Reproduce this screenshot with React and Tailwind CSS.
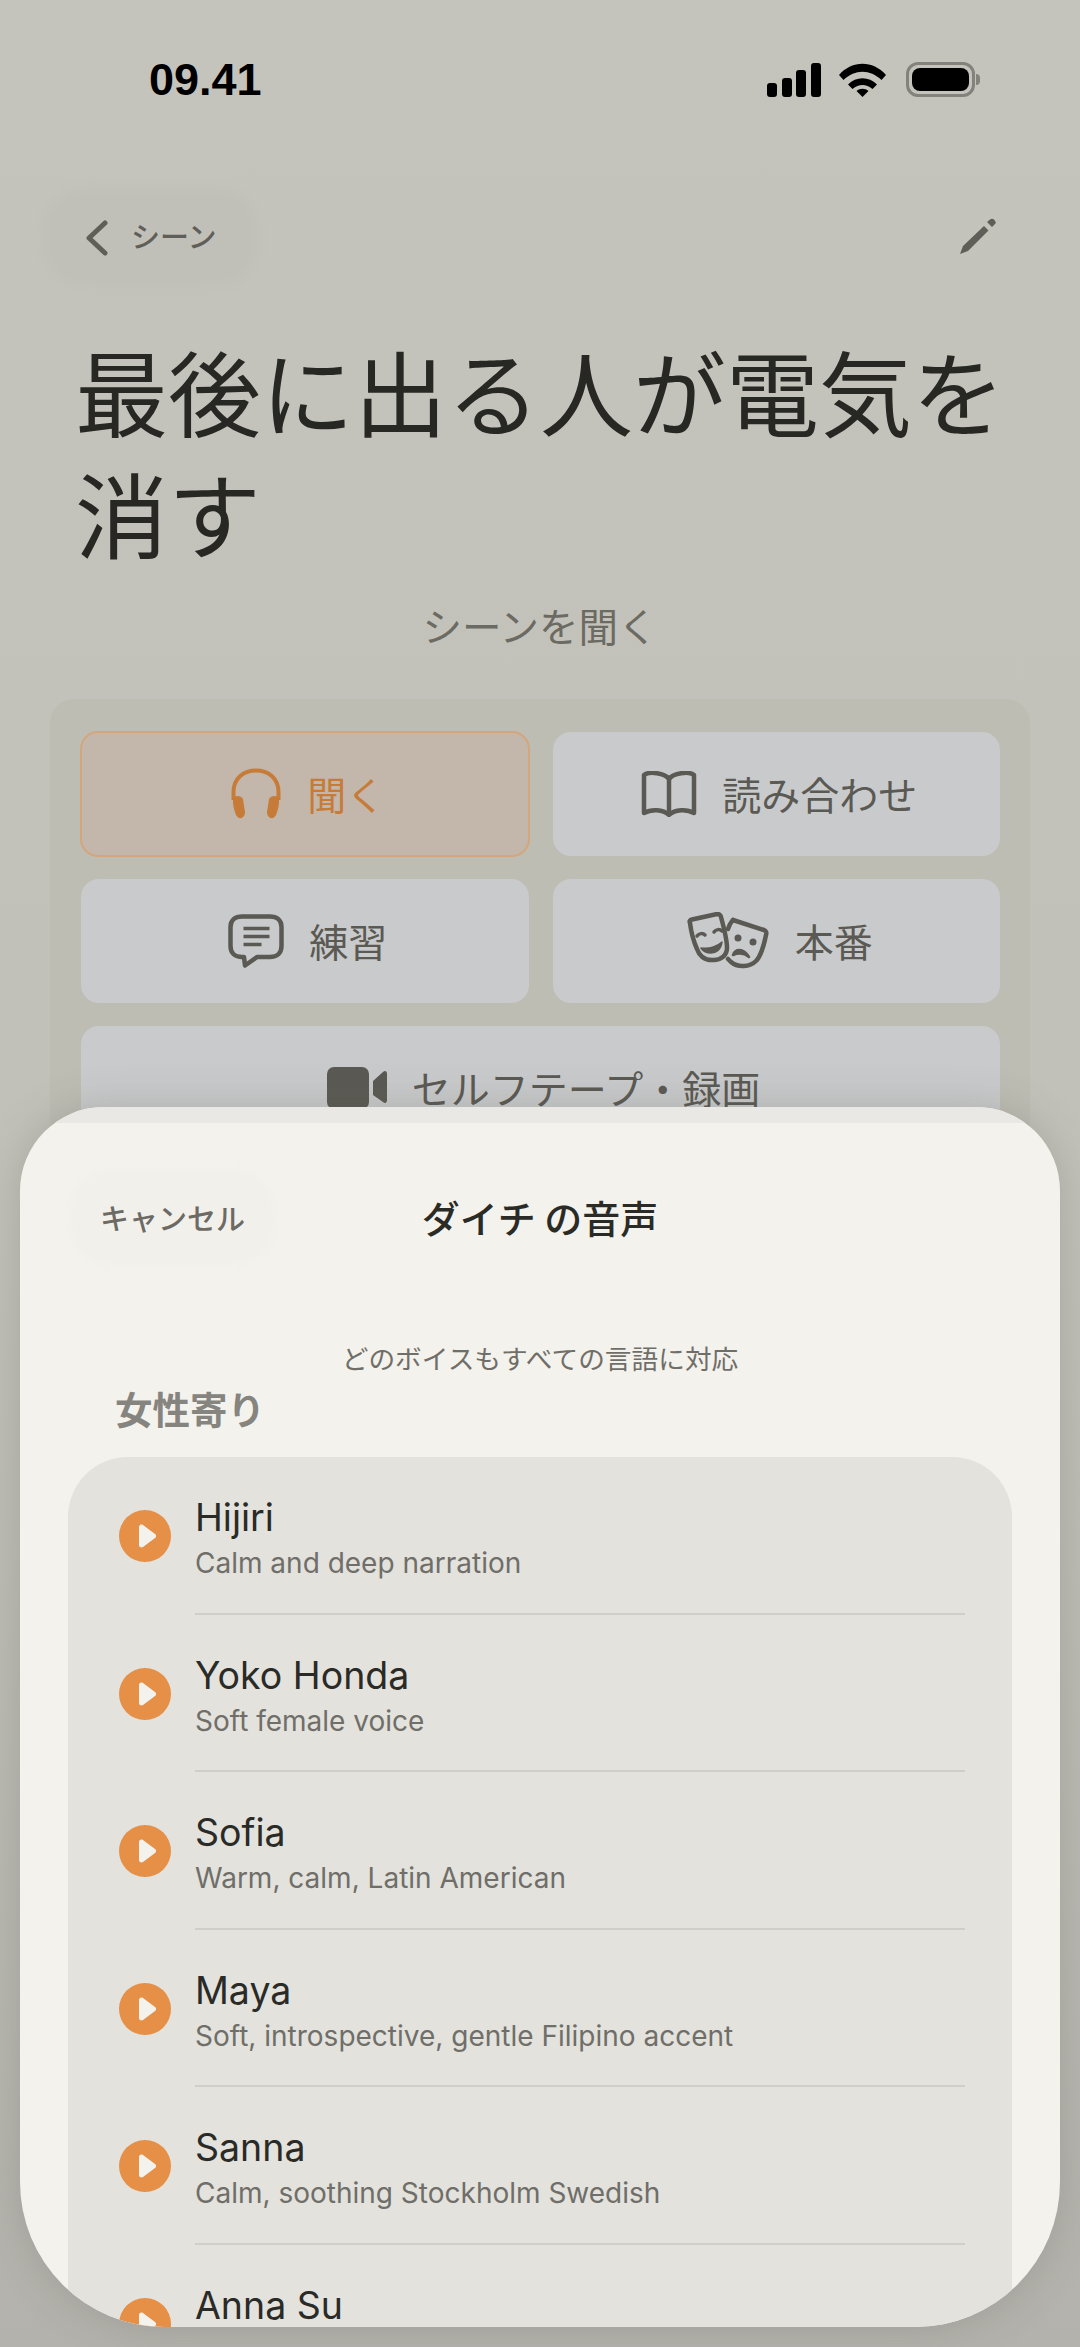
import React from "react";

const cjk = "font-['Noto_Sans_CJK_JP','Noto_Sans',sans-serif]";

const voices = [
  { name: "Hijiri", desc: "Calm and deep narration" },
  { name: "Yoko Honda", desc: "Soft female voice" },
  { name: "Sofia", desc: "Warm, calm, Latin American" },
  { name: "Maya", desc: "Soft, introspective, gentle Filipino accent" },
  { name: "Sanna", desc: "Calm, soothing Stockholm Swedish" },
  { name: "Anna Su", desc: "" },
];

const StatusIcons = () => (
  <div className="flex items-center">
    <svg width="54" height="34" viewBox="0 0 54 34" fill="#000">
      <rect x="0" y="20" width="10" height="14" rx="3" />
      <rect x="15" y="15" width="10" height="19" rx="3" />
      <rect x="29" y="7" width="10" height="27" rx="3" />
      <rect x="44" y="0" width="10" height="34" rx="3" />
    </svg>
    <svg className="ml-[18px]" width="47" height="34" viewBox="0 0 47 34" fill="#000">
      <path d="M0 12 C13 -3 34 -3 47 12 L42.5 17 C31 6 16 6 4.5 17 Z" />
      <path d="M9 21.500 C17 13 30 13 38 21.500 L33.500 26 C27 20.500 20 20.500 13.500 26 Z" />
      <path d="M17.500 28 C21 25 26 25 29.500 28 L23.500 34 Z" />
    </svg>
    <div className="ml-[20px] flex items-center">
      <div className="w-[69px] h-[35px] rounded-[12px] border-[3px] border-[#83827d] p-[3px]">
        <div className="w-full h-full rounded-[8px] bg-black" />
      </div>
      <div className="w-[4px] h-[11px] rounded-r-full bg-[#83827d] ml-[1px]" />
    </div>
  </div>
);

const Headphones = () => (
  <svg width="52" height="52" viewBox="0 0 52 52" fill="none">
    <path d="M3.500 32 V24 C3.500 10 14 2.500 26 2.500 C38 2.500 48.500 10 48.500 24 V32" stroke="#c67c38" strokeWidth="4" />
    <path d="M3 31 C4 27 11 27 13 31 L15 44 C15 51 8 52 6 47 C4 42 2.500 36 3 31 Z" fill="#c67c38" />
    <path d="M49 31 C48 27 41 27 39 31 L37 44 C37 51 44 52 46 47 C48 42 49.500 36 49 31 Z" fill="#c67c38" />
  </svg>
);

const Book = () => (
  <svg width="56" height="46" viewBox="0 0 56 46" fill="none" stroke="#5a5953" strokeWidth="4.500" strokeLinejoin="round">
    <path d="M28 8 C24 2 8 0 3 4 V42 C10 38 22 38 28 44 C34 38 46 38 53 42 V4 C48 0 32 2 28 8 Z" />
    <path d="M28 8 V42" />
  </svg>
);

const Bubble = () => (
  <svg width="56" height="54" viewBox="0 0 56 54" fill="none" stroke="#5a5953" strokeWidth="4.500" strokeLinejoin="round" strokeLinecap="round">
    <path d="M14 2.500 H42 C49 2.500 53.500 6 53.500 13 V32 C53.500 39 49 43 42 43 H29 L17 51.500 L16 43 H14 C7 43 2.500 39 2.500 32 V13 C2.500 6 7 2.500 14 2.500 Z" />
    <path d="M15.500 14.500 H41.500 M15.500 22.500 H41.500 M15.500 30.500 H33.500" strokeWidth="3.500" strokeLinecap="butt" />
  </svg>
);

const Masks = () => (
  <svg width="84" height="58" viewBox="0 0 84 58" fill="none" stroke="#5a5953" strokeWidth="4.500" strokeLinejoin="round" strokeLinecap="round">
    <path d="M4 11 C3 9 4 8 6 7.500 L31 2 C33 2 35 3 35 5 C38 16 41 29 41 36 C41 44 34 48 28 48 C18 49 13 43 11 37 C7 28 5 19 4 11 Z" />
    <path d="M11 24 C13 21 17 21 19 23 M28 20 C30 17 34 17 36 19" strokeWidth="3.500" />
    <path d="M15 36 C22 37 30 35 36 30 C35 38 30 41 25 41 C20 41 17 39 15 36 Z" fill="#5a5953" stroke="#5a5953" strokeWidth="1.500" />
    <path d="M47 8 L78 18 C80 19 81 20 80 23 C78 33 75 44 70 49 C64 55 52 56 45 50 L42 47" />
    <path d="M47 8 C44 11 43 14 42 17" />
    <circle cx="52" cy="26" r="3.500" fill="#5a5953" stroke="none" />
    <circle cx="67" cy="30" r="3.500" fill="#5a5953" stroke="none" />
    <path d="M47 43 C49 37 57 35 63 45 C57 40 52 41 47 43 Z" fill="#5a5953" stroke="#5a5953" strokeWidth="2.500" />
  </svg>
);

const Video = () => (
  <svg width="60" height="42" viewBox="0 0 60 42" fill="#5a5953">
    <rect x="0" y="0" width="42" height="42" rx="7" />
    <path d="M46 14 L56 5 C58 3 60 4 60 7 V33 C60 36 58 37 56 35 L46 28 Z" />
  </svg>
);

const ModeButton = ({ icon, label, active, wide }) => (
  <div
    className={`flex items-center justify-center gap-[25px] rounded-[18px] pl-[6px] ${cjk} text-[39px] ${
      wide ? "col-span-2 h-[125px] pb-[2px]" : active ? "h-[126px] -m-[1px] pb-[1px]" : "h-[124px] pb-[1px]"
    } ${
      active
        ? "bg-[#c3b7ab] text-[#c67c38] border-2 border-[#d4a67d]"
        : "bg-[#c9cacb] text-[#5a5953]"
    }`}
  >
    {icon}
    <span>{label}</span>
  </div>
);

const VoiceRow = ({ voice, last }) => (
  <div className="flex pl-[51px] pr-[47px]">
    <div className="w-[52px] h-[52px] mt-[53px] rounded-full bg-[#e58f47] flex items-center justify-center shrink-0 pl-[4px]">
      <svg width="18" height="24" viewBox="0 0 18 24" fill="#f4f2ec">
        <path d="M1 3 C1 1 3 0 5 1 L17 10 C18.500 11 18.500 13 17 14 L5 23 C3 24 1 23 1 21 Z" />
      </svg>
    </div>
    <div className={`ml-[24px] flex-1 h-[157.600px] ${last ? "" : "border-b-2 border-[#cfcec9]"}`}>
      <div className="pt-[36px] font-['Inter',sans-serif] text-[37.500px] leading-[50px] text-[#2a2a27]">{voice.name}</div>
      <div className="font-['Inter',sans-serif] text-[28px] leading-[36px] mt-[2px] text-[#6f6e69]">{voice.desc}</div>
    </div>
  </div>
);

export default function App() {
  return (
    <div className="relative w-[1080px] h-[2347px] overflow-hidden bg-linear-to-b from-[#c5c4bc] via-[#c2c1b9] to-[#b3b2ac]">
      {/* scene behind the sheet */}
      <div className="h-[185px] pl-[149px] pr-[100px] pt-[50px] flex justify-between items-start">
        <span className="font-['Liberation_Sans',sans-serif] font-bold text-[45px] leading-[60px] text-black">09.41</span>
        <div className="pt-[12px]">
          <StatusIcons />
        </div>
      </div>
      <div className="h-[105px] pl-[50px] pr-[84px] flex justify-between items-center">
        <div className={`flex items-center w-[200px] h-[85px] rounded-[34px] bg-[#c1c0b8] shadow-[0_0_14px_8px_#c1c0b8] pl-[35px] pb-[4px] gap-[22px] ${cjk} text-[29px] font-medium text-[#5f5e58]`}>
          <svg width="24" height="36" viewBox="0 0 24 36" fill="none" stroke="#5f5e58" strokeWidth="5" strokeLinecap="round" strokeLinejoin="round" className="mt-[4px]">
            <path d="M20 3 L4 18 L20 33" />
          </svg>
          <span>シーン</span>
        </div>
        <svg width="36" height="36" viewBox="0 0 36 36" fill="#5f5e58" className="-mt-[3px]">
          <path d="M0 36 L3 28 L24 8 L28.500 12.500 L8 33 Z" />
          <path d="M27 4 L30 1.500 C31 0.500 33 0.500 34 1.500 L35 3 C36 4 36 5 35 6 L32 9 Z" />
        </svg>
      </div>
      <h1 className={`mt-[39px] mx-[75px] text-[93px] leading-[122px] font-normal text-[#272723] ${cjk}`}>
        最後に出る人が電気を消す
      </h1>
      <p className={`mt-[24px] text-center text-[39.500px] leading-[56px] text-[#6b6a63] ${cjk}`}>シーンを聞く</p>
      <div className="mx-[50px] mt-[46px] pt-[33px] pl-[31px] pr-[30px] h-[500px] rounded-[24px] bg-[#bebdb4]">
        <div className="grid grid-cols-2 gap-x-[24px] gap-y-[23px]">
          <ModeButton icon={<Headphones />} label="聞く" active />
          <ModeButton icon={<Book />} label="読み合わせ" />
          <ModeButton icon={<Bubble />} label="練習" />
          <ModeButton icon={<Masks />} label="本番" />
          <ModeButton icon={<Video />} label="セルフテープ・録画" wide />
        </div>
      </div>

      {/* voice picker sheet */}
      <div className="absolute left-[20px] top-[1107px] w-[1040px] h-[1220px] overflow-hidden rounded-t-[84px] rounded-b-[145px] bg-[#f4f2ec] shadow-[0_0_40px_rgba(90,90,85,0.25)]">
        <div className="h-[16px] bg-[#e9e8e4]" />
        <div className="relative h-[190px] flex items-center justify-center pb-[3px]">
          <div className={`absolute left-[55px] top-[52px] w-[195px] h-[85px] rounded-[34px] bg-[#f2f0ea] shadow-[0_0_10px_5px_#f2f0ea] flex items-center justify-center text-[29px] font-medium text-[#6b6a65] ${cjk}`}>
            キャンセル
          </div>
          <span className={`text-[38px] font-medium text-[#2a2a27] ${cjk}`}>ダイチ の音声</span>
        </div>
        <p className={`mt-[26px] text-center text-[26.700px] leading-[38px] text-[#6f6e69] ${cjk}`}>どのボイスもすべての言語に対応</p>
        <h2 className={`mt-[5px] ml-[95px] text-[37.500px] leading-[52px] font-semibold text-[#85847f] ${cjk}`}>女性寄り</h2>
        <div className="mt-[23px] mx-[48px] h-[900px] rounded-t-[60px] bg-[#e3e2dd]">
          {voices.map((v, i) => (
            <VoiceRow key={v.name} voice={v} last={i === voices.length - 1} />
          ))}
        </div>
      </div>
    </div>
  );
}
